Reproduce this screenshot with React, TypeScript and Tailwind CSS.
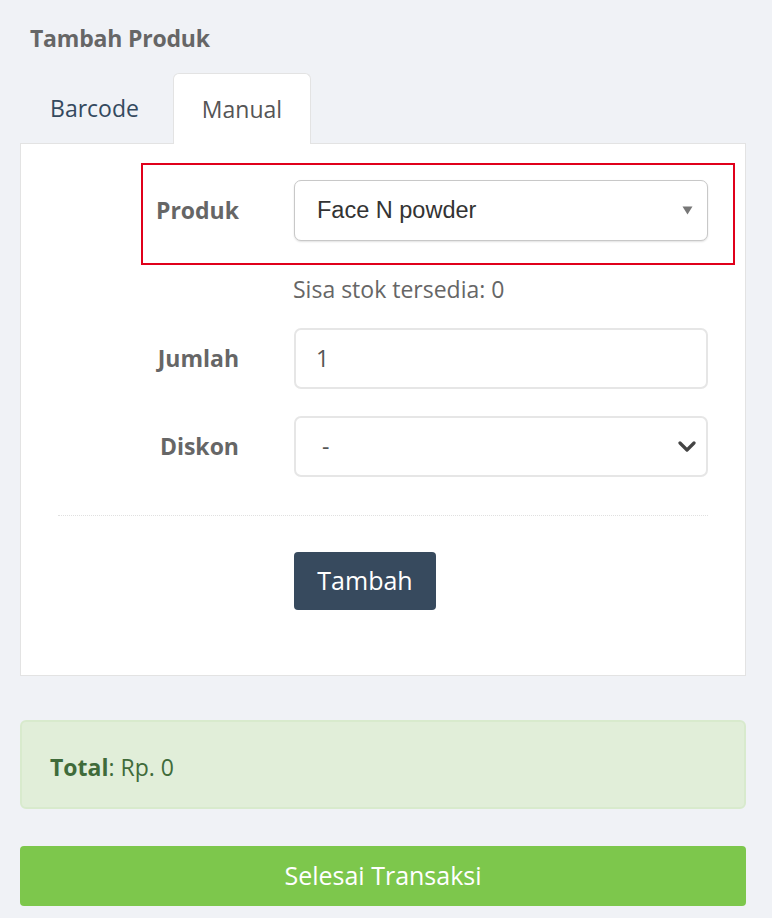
import React from "react";

export default function App() {
  const font = { fontFamily: '"Open Sans", "Noto Sans", sans-serif' };
  return (
    <div className="min-h-[918px] w-[772px] bg-[#f0f2f6] text-[#666]" style={font}>
      <div className="pl-[20px] pr-[26px] pt-[23px] pb-[12px]">
        <h2 className="pl-[10px] text-[23px] leading-[30px] font-bold tracking-[-0.2px] text-[#666]">Tambah Produk</h2>

        {/* Tabs */}
        <div className="mt-[20px] flex h-[70px] items-stretch">
          <div className="flex w-[149px] items-center justify-center text-[23px] text-[#34495e]">Barcode</div>
          <div className="relative z-10 -mb-px ml-[4px] flex w-[138px] items-center justify-center rounded-t-[6px] border border-b-0 border-[#e3e3e3] bg-white text-[23px] text-[#555]">
            Manual
          </div>
        </div>

        {/* Panel */}
        <div className="relative border border-[#e3e3e3] bg-white pl-[37px] pr-[37px] pt-[36px] pb-[65px]">
          <div className="pointer-events-none absolute left-[120px] top-[19px] h-[102px] w-[594px] border-2 border-[#e0001b]" />

          {/* Produk */}
          <div className="flex items-center">
            <label className="w-[181px] text-right text-[23px] font-bold text-[#666]">Produk</label>
            <div className="ml-[55px] flex h-[61px] flex-1 items-center justify-between rounded-[7px] border border-[#c8c8c8] bg-white pl-[22px] pr-[14px] shadow-[0_1px_2px_rgba(0,0,0,0.12)]">
              <span className="text-[23.5px] text-[#333]" style={{ fontFamily: '"Liberation Sans", Arial, sans-serif' }}>
                Face N powder
              </span>
              <svg width="11" height="9" viewBox="0 0 11 9">
                <path d="M0.5 0.5 L10.5 0.5 L5.5 8.5 Z" fill="#777" />
              </svg>
            </div>
          </div>
          <div className="mt-[33px] flex">
            <div className="w-[181px]" />
            <p className="ml-[54px] text-[23px] leading-[30px] text-[#666]">Sisa stok tersedia: 0</p>
          </div>

          {/* Jumlah */}
          <div className="mt-[24px] flex items-center">
            <label className="w-[181px] text-right text-[23px] font-bold text-[#666]">Jumlah</label>
            <div className="ml-[55px] flex h-[61px] flex-1 items-center rounded-[7px] border-2 border-[#e6e6e6] bg-white pl-[20px]">
              <span className="text-[23px] text-[#555]">1</span>
            </div>
          </div>

          {/* Diskon */}
          <div className="mt-[27px] flex items-center">
            <label className="w-[181px] text-right text-[23px] font-bold text-[#666]">Diskon</label>
            <div className="ml-[55px] flex h-[61px] flex-1 items-center justify-between rounded-[7px] border-2 border-[#e6e6e6] bg-white pl-[26px] pr-[10px]">
              <span className="text-[23px] text-[#555]">-</span>
              <svg width="18" height="12" viewBox="0 0 18 12">
                <path d="M2 2 L9 9 L16 2" stroke="#444" strokeWidth="3.2" fill="none" strokeLinecap="round" strokeLinejoin="round" />
              </svg>
            </div>
          </div>

          <div className="mt-[38px] border-t border-dotted border-[#e0e0e0]" />

          <div className="mt-[36px] flex">
            <div className="w-[181px]" />
            <button className="ml-[55px] flex h-[58px] w-[142px] items-center justify-center rounded-[4px] bg-[#374a5e] text-[25px] text-white">
              Tambah
            </button>
          </div>
        </div>

        {/* Total */}
        <div className="mt-[44px] flex h-[89px] items-center rounded-[6px] border-2 border-[#d8eacd] bg-[#e1eed9] pl-[28px] pt-[6px] text-[23px] text-[#3f6b3a]">
          <span className="font-bold">Total</span>
          <span>: Rp. 0</span>
        </div>

        <button className="mt-[37px] flex h-[60px] w-full items-center justify-center rounded-[4px] bg-[#7dc74c] text-[25px] text-white">
          Selesai Transaksi
        </button>
      </div>
    </div>
  );
}
